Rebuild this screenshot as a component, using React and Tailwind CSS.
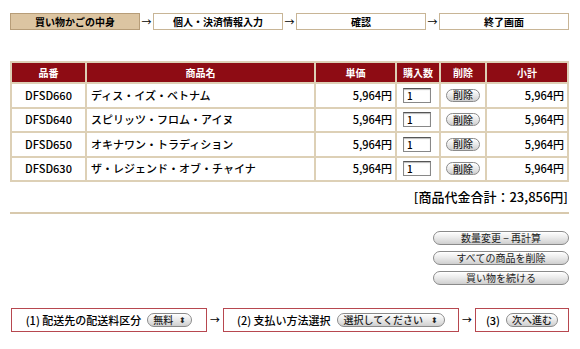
import React from 'react'

const steps = ['買い物かごの中身', '個人・決済情報入力', '確認', '終了画面']

const items = [
  { code: 'DFSD660', name: 'ディス・イズ・ベトナム' },
  { code: 'DFSD640', name: 'スピリッツ・フロム・アイヌ' },
  { code: 'DFSD650', name: 'オキナワン・トラディション' },
  { code: 'DFSD630', name: 'ザ・レジェンド・オブ・チャイナ' },
]

// aqua-ish grey pill button
function Pill({ children, className = '' }) {
  return (
    <button
      className={`rounded-full border border-[#8a8a8a] bg-gradient-to-b from-[#ffffff] via-[#e9e9e9] to-[#cfcfcf] text-[10px] leading-none text-[#222] shadow-[inset_0_1px_0_#fff] ${className}`}
    >
      {children}
    </button>
  )
}

function Arrow() {
  return <span className="w-[13px] text-center text-[10px] leading-none text-black">→</span>
}

export default function App() {
  return (
    <div
      className="w-[580px] h-[349px] bg-white text-black overflow-hidden"
      style={{ fontFamily: '"Noto Sans CJK JP", "Noto Sans", sans-serif' }}
    >
      {/* step indicator */}
      <div className="flex items-center pl-[10px] pt-[13px]">
        {steps.map((s, i) => (
          <React.Fragment key={s}>
            {i > 0 && <Arrow />}
            <div
              className={`flex h-[17px] w-[130px] items-center justify-center border text-[10px] font-bold leading-none ${
                i === 0 ? 'border-[#b79d78] bg-[#dcc5a2]' : 'border-[#c8b596] bg-white'
              }`}
            >
              {s}
            </div>
          </React.Fragment>
        ))}
      </div>

      {/* cart table */}
      <div className="px-[10px] pt-[31px]">
        <table className="w-[559px] border-separate border-spacing-[2px] bg-[#ddd0b6] text-[11px] leading-none">
          <thead>
            <tr className="h-[19px] bg-[#8e0c14] text-[10px] font-bold text-white">
              <th className="w-[73px]">品番</th>
              <th>商品名</th>
              <th className="w-[79px]">単価</th>
              <th className="w-[42px]">購入数</th>
              <th className="w-[44px]">削除</th>
              <th className="w-[80px]">小計</th>
            </tr>
          </thead>
          <tbody>
            {items.map(it => (
              <tr key={it.code} className="h-[22.5px] bg-white font-medium">
                <td className="text-center">{it.code}</td>
                <td className="pl-[4px]">{it.name}</td>
                <td className="pr-[3px] text-right">5,964円</td>
                <td className="pl-[6px]">
                  <div className="h-[15px] w-[28px] border border-[#888] border-t-[#555] pl-[3px] text-[10px] leading-[13px] shadow-[inset_0_1px_1px_#bbb]">
                    1
                  </div>
                </td>
                <td className="text-center">
                  <Pill className="h-[13px] px-[6px] text-[9px]">削除</Pill>
                </td>
                <td className="pr-[3px] text-right">5,964円</td>
              </tr>
            ))}
          </tbody>
        </table>

        <div className="pr-[2px] pt-[8px] text-right text-[13px] font-medium leading-none">
          [商品代金合計：23,856円]
        </div>
        <div className="mt-[9px] h-[2px] w-[559px] bg-[#d8c9ad]" />

        <div className="flex flex-col items-end gap-[6px] pt-[17px] pr-[1px]">
          <Pill className="h-[14px] w-[136px]">数量変更 − 再計算</Pill>
          <Pill className="h-[14px] w-[136px]">すべての商品を削除</Pill>
          <Pill className="h-[14px] w-[136px]">買い物を続ける</Pill>
        </div>
      </div>

      {/* bottom steps */}
      <div className="flex items-center pl-[11px] pt-[23px] text-[11px] font-medium leading-none">
        <div className="flex h-[24px] w-[196px] items-center justify-center gap-[6px] border border-[#b7474f]">
          <span>(1) 配送先の配送料区分</span>
          <Pill className="flex h-[14px] items-center gap-[6px] rounded-[4px] px-[5px] text-[9px]">
            無料 <span className="text-[8px]">⬍</span>
          </Pill>
        </div>
        <span className="w-[16px] text-center text-[10px]">→</span>
        <div className="flex h-[24px] w-[236px] items-center justify-center gap-[6px] border border-[#b7474f]">
          <span>(2) 支払い方法選択</span>
          <Pill className="flex h-[14px] items-center gap-[8px] rounded-[4px] px-[6px] text-[9px]">
            選択してください <span className="text-[8px]">⬍</span>
          </Pill>
        </div>
        <span className="w-[16px] text-center text-[10px]">→</span>
        <div className="flex h-[24px] w-[94px] items-center justify-center gap-[6px] border border-[#b7474f]">
          <span>(3)</span>
          <Pill className="h-[14px] px-[5px]">次へ進む</Pill>
        </div>
      </div>
    </div>
  )
}
